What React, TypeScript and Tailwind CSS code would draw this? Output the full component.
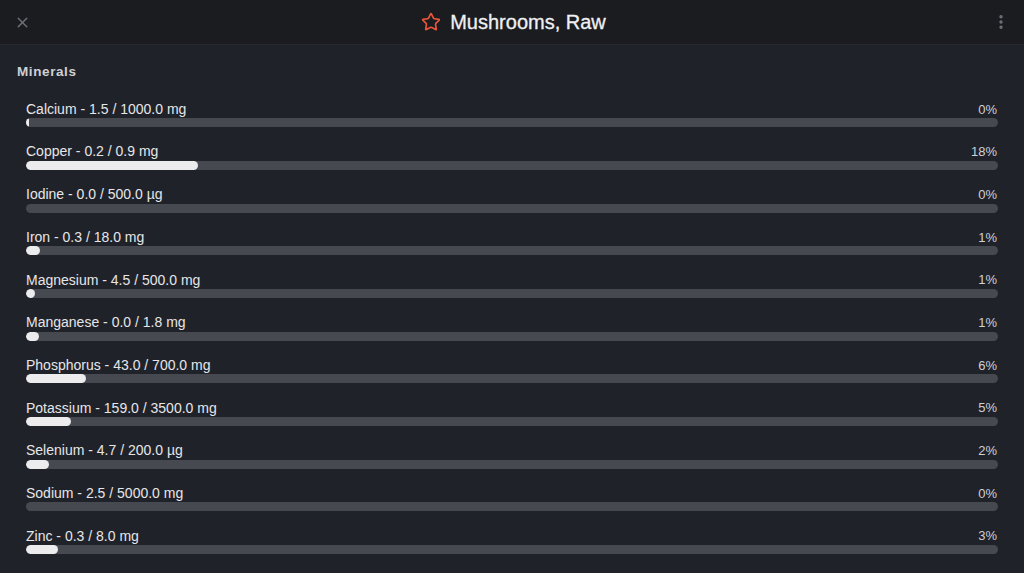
import { X, Star, EllipsisVertical } from "lucide-react";

const minerals = [
  { name: "Calcium", amount: "1.5", target: "1000.0", unit: "mg", pct: 0, fill: 0.3 },
  { name: "Copper", amount: "0.2", target: "0.9", unit: "mg", pct: 18, fill: 17.7 },
  { name: "Iodine", amount: "0.0", target: "500.0", unit: "µg", pct: 0, fill: 0 },
  { name: "Iron", amount: "0.3", target: "18.0", unit: "mg", pct: 1, fill: 1.4 },
  { name: "Magnesium", amount: "4.5", target: "500.0", unit: "mg", pct: 1, fill: 0.9 },
  { name: "Manganese", amount: "0.0", target: "1.8", unit: "mg", pct: 1, fill: 1.3 },
  { name: "Phosphorus", amount: "43.0", target: "700.0", unit: "mg", pct: 6, fill: 6.2 },
  { name: "Potassium", amount: "159.0", target: "3500.0", unit: "mg", pct: 5, fill: 4.6 },
  { name: "Selenium", amount: "4.7", target: "200.0", unit: "µg", pct: 2, fill: 2.4 },
  { name: "Sodium", amount: "2.5", target: "5000.0", unit: "mg", pct: 0, fill: 0 },
  { name: "Zinc", amount: "0.3", target: "8.0", unit: "mg", pct: 3, fill: 3.3 },
];

export default function App() {
  return (
    <div className="h-[573px] w-[1024px] overflow-hidden bg-[#20222a] font-['Liberation_Sans',sans-serif] text-[#e4e4e6]">
      <header className="flex h-[45px] items-center justify-between border-b border-[#25272e] bg-[#1a1c20] px-[14px]">
        <X className="h-[17px] w-[17px] text-[#6f7177]" strokeWidth={2} />
        <div className="flex items-center gap-[9px] pl-[4px]">
          <Star className="h-[20px] w-[20px] text-[#e8553a]" strokeWidth={2} />
          <span className="text-[20px] text-[#f0f0f2] [-webkit-text-stroke:0.3px_#f0f0f2]">Mushrooms, Raw</span>
        </div>
        <EllipsisVertical className="h-[18px] w-[18px] text-[#6f7177]" strokeWidth={2.5} />
      </header>

      <div className="px-[17px] pt-[17px]">
        <div className="text-[13.5px] font-bold tracking-[0.6px] text-[#cfd0d4]">Minerals</div>
        <div className="mt-[19px] flex flex-col gap-[16.7px] pl-[9px] pr-[9px]">
          {minerals.map((m) => (
            <div key={m.name}>
              <div className="flex h-4 items-center justify-between text-[#e6e6e8]">
                <span className="text-[14px]">
                  {m.name} - {m.amount} / {m.target} {m.unit}
                </span>
                <span className="pr-[1px] text-[13px] text-[#cfd0d4]">{m.pct}%</span>
              </div>
              <div className="mt-[1px] h-[9px] w-full overflow-hidden rounded-full bg-[#464950]">
                <div
                  className="h-full rounded-full bg-[#ececee]"
                  style={{ width: `${m.fill}%` }}
                />
              </div>
            </div>
          ))}
        </div>
      </div>
    </div>
  );
}
